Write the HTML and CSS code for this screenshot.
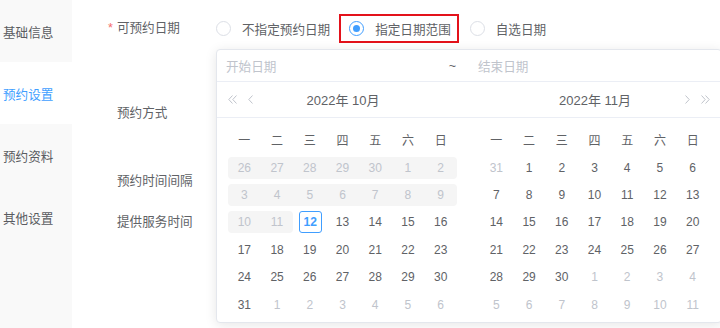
FILE: index.html
```html
<!DOCTYPE html>
<html lang="zh-CN">
<head>
  <meta charset="UTF-8" />
  <meta name="viewport" content="width=device-width, initial-scale=1.0"/>
  <title>预约设置</title>
  <link rel="stylesheet" href="styles.css">
</head>
<body>
  <div class="layout">
    <aside class="tabs">
      <div class="tab">基础信息</div>
      <div class="tab active">预约设置</div>
      <div class="tab">预约资料</div>
      <div class="tab">其他设置</div>
    </aside>

    <main class="form">
      <div class="form-item item-date">
        <label class="form-label required">可预约日期</label>
        <div class="form-content">
          <div class="radio-group">
            <label class="radio"><span class="radio-dot"></span>不指定预约日期</label>
            <label class="radio checked marked"><span class="radio-dot"></span>指定日期范围</label>
            <label class="radio"><span class="radio-dot"></span>自选日期</label>
          </div>

          <div class="picker">
            <div class="picker-inputs">
              <div class="picker-input left"><span>开始日期</span><span class="sep">~</span></div>
              <div class="picker-input right"><span>结束日期</span></div>
            </div>

            <div class="picker-body">
              <div class="panel">
                <div class="panel-header">
                  <div class="arrows">
                    <svg width="9" height="9" viewBox="0 0 9 9"><path d="M4.5 0.5 L0.8 4.5 L4.5 8.5 M8.5 0.5 L4.8 4.5 L8.5 8.5" fill="none" stroke="#c0c4cc" stroke-width="1"/></svg>
                    <svg width="5" height="9" viewBox="0 0 5 9"><path d="M4.5 0.5 L0.8 4.5 L4.5 8.5" fill="none" stroke="#c0c4cc" stroke-width="1"/></svg>
                  </div>
                  <div class="panel-title">2022年 10月</div>
                  <div></div>
                </div>
                <div class="date-table">
                  <div class="week">
                    <span>一</span><span>二</span><span>三</span><span>四</span><span>五</span><span>六</span><span>日</span>
                  </div>
                  <div class="days">
                    <span class="cell off disabled">26</span><span class="cell off disabled">27</span><span class="cell off disabled">28</span><span class="cell off disabled">29</span><span class="cell off disabled">30</span><span class="cell disabled">1</span><span class="cell disabled">2</span>
                    <span class="cell disabled">3</span><span class="cell disabled">4</span><span class="cell disabled">5</span><span class="cell disabled">6</span><span class="cell disabled">7</span><span class="cell disabled">8</span><span class="cell disabled">9</span>
                    <span class="cell disabled">10</span><span class="cell disabled end">11</span><span class="cell today"><b>12</b></span><span class="cell">13</span><span class="cell">14</span><span class="cell">15</span><span class="cell">16</span>
                    <span class="cell">17</span><span class="cell">18</span><span class="cell">19</span><span class="cell">20</span><span class="cell">21</span><span class="cell">22</span><span class="cell">23</span>
                    <span class="cell">24</span><span class="cell">25</span><span class="cell">26</span><span class="cell">27</span><span class="cell">28</span><span class="cell">29</span><span class="cell">30</span>
                    <span class="cell">31</span><span class="cell off">1</span><span class="cell off">2</span><span class="cell off">3</span><span class="cell off">4</span><span class="cell off">5</span><span class="cell off">6</span>
                  </div>
                </div>
              </div>

              <div class="panel">
                <div class="panel-header">
                  <div></div>
                  <div class="panel-title">2022年 11月</div>
                  <div class="arrows end">
                    <svg width="5" height="9" viewBox="0 0 5 9"><path d="M0.5 0.5 L4.2 4.5 L0.5 8.5" fill="none" stroke="#c0c4cc" stroke-width="1"/></svg>
                    <svg width="9" height="9" viewBox="0 0 9 9"><path d="M0.5 0.5 L4.2 4.5 L0.5 8.5 M4.5 0.5 L8.2 4.5 L4.5 8.5" fill="none" stroke="#c0c4cc" stroke-width="1"/></svg>
                  </div>
                </div>
                <div class="date-table">
                  <div class="week">
                    <span>一</span><span>二</span><span>三</span><span>四</span><span>五</span><span>六</span><span>日</span>
                  </div>
                  <div class="days">
                    <span class="cell off">31</span><span class="cell">1</span><span class="cell">2</span><span class="cell">3</span><span class="cell">4</span><span class="cell">5</span><span class="cell">6</span>
                    <span class="cell">7</span><span class="cell">8</span><span class="cell">9</span><span class="cell">10</span><span class="cell">11</span><span class="cell">12</span><span class="cell">13</span>
                    <span class="cell">14</span><span class="cell">15</span><span class="cell">16</span><span class="cell">17</span><span class="cell">18</span><span class="cell">19</span><span class="cell">20</span>
                    <span class="cell">21</span><span class="cell">22</span><span class="cell">23</span><span class="cell">24</span><span class="cell">25</span><span class="cell">26</span><span class="cell">27</span>
                    <span class="cell">28</span><span class="cell">29</span><span class="cell">30</span><span class="cell off">1</span><span class="cell off">2</span><span class="cell off">3</span><span class="cell off">4</span>
                    <span class="cell off">5</span><span class="cell off">6</span><span class="cell off">7</span><span class="cell off">8</span><span class="cell off">9</span><span class="cell off">10</span><span class="cell off">11</span>
                  </div>
                </div>
              </div>
            </div>
          </div>
        </div>
      </div>

      <div class="form-item item-mode">
        <label class="form-label">预约方式</label>
      </div>
      <div class="form-item item-interval">
        <label class="form-label">预约时间间隔</label>
      </div>
      <div class="form-item">
        <label class="form-label">提供服务时间</label>
      </div>
    </main>
  </div>
</body>
</html>
```

FILE: styles.css
```css
body {
  margin: 0;
  font-family: "Liberation Sans", "Noto Sans CJK SC", sans-serif;
  font-size: 12.6px;
  color: #606266;
  background: white;
}

.layout {
  display: flex;
  height: 328px;
  overflow: hidden;
}

.tabs {
  width: 72px;
  flex-shrink: 0;
  background: #f9f9f9;
}

.tab {
  height: 62px;
  padding-left: 3px;
  display: flex;
  align-items: center;
  color: #5a5c61;
}

.tab.active {
  background: white;
  color: #409eff;
}

.form {
  flex: 1;
  padding-top: 14px;
}

.form-item {
  display: flex;
}

.item-date {
  height: 85px;
}

.item-mode {
  height: 68px;
}

.item-interval {
  height: 41px;
}

.form-label {
  width: 99px;
  flex-shrink: 0;
  padding-left: 45px;
  line-height: 28px;
}

.required::before {
  content: "*";
  color: #f56c6c;
  margin-left: -9px;
  margin-right: 4px;
}

.form-content {
  position: relative;
}

/* radios */
.radio-group {
  display: flex;
  align-items: center;
  gap: 19px;
  height: 29px;
}

.radio {
  display: flex;
  align-items: center;
  gap: 11px;
  height: 29px;
  box-sizing: border-box;
}

.radio-dot {
  width: 13px;
  height: 13px;
  border: 1px solid #dcdfe6;
  border-radius: 50%;
  position: relative;
}

.radio.checked .radio-dot {
  border-color: #409eff;
}

.radio.checked .radio-dot::after {
  content: "";
  position: absolute;
  width: 7px;
  height: 7px;
  left: 3px;
  top: 3px;
  border-radius: 50%;
  background: #409eff;
}

.radio.marked {
  border: 2px solid #e3121b;
  padding: 0 6px 0 8px;
  margin: 0 -8px 0 -10px;
}

/* date range picker */
.picker {
  position: absolute;
  left: 0;
  top: 35px;
  width: 504px;
  background: white;
  border: 1px solid #e4e7ed;
  border-radius: 4px;
  box-shadow: 0 2px 12px rgba(0,0,0,0.1);
  z-index: 2;
}

.picker-inputs {
  display: flex;
  height: 31px;
  border-bottom: 1px solid #ebeef5;
  color: #c0c4cc;
}

.picker-input {
  width: 252px;
  display: flex;
  align-items: center;
  box-sizing: border-box;
}

.picker-input.left {
  justify-content: space-between;
  padding: 0 13px 0 9px;
}

.picker-input.right {
  padding-left: 9px;
}

.sep {
  color: #606266;
}

.picker-body {
  display: flex;
}

.panel {
  width: 252px;
}

.panel-header {
  height: 35px;
  border-bottom: 1px solid #ebeef5;
  display: grid;
  grid-template-columns: 1fr auto 1fr;
  align-items: center;
  padding: 0 11px;
}

.panel-title {
  font-size: 13px;
  color: #606266;
}

.arrows {
  display: flex;
  align-items: center;
  gap: 11px;
}

.arrows.end {
  justify-content: flex-end;
}

.arrows svg {
  display: block;
}

.date-table {
  padding: 6px 12px 4px 11px;
  font-size: 12px;
}

.week,
.days {
  display: grid;
  grid-template-columns: repeat(7, 1fr);
  width: 229px;
}

.week {
  height: 30px;
  align-items: center;
  text-align: center;
}

.days {
  grid-auto-rows: 27.4px;
  align-items: center;
}

.cell {
  height: 22px;
  display: flex;
  align-items: center;
  justify-content: center;
  color: #606266;
}

.cell.off {
  color: #c0c4cc;
}

.cell.disabled {
  background: #f5f5f5;
  color: #c0c4cc;
}

.cell.disabled:nth-child(7n+1) {
  border-radius: 4px 0 0 4px;
}

.cell.disabled:nth-child(7n),
.cell.disabled.end {
  border-radius: 0 4px 4px 0;
}

.cell.today b {
  width: 21px;
  height: 20px;
  border: 1px solid #409eff;
  border-radius: 3px;
  color: #409eff;
  display: flex;
  align-items: center;
  justify-content: center;
  margin-left: 1px;
}
```
